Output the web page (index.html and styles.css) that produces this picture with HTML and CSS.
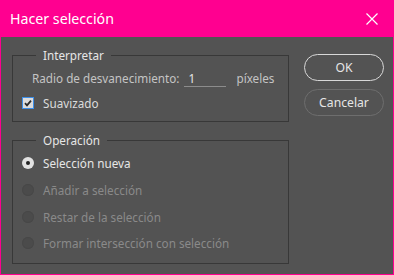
FILE: index.html
```html
<html>
<head>
<title>Hacer selección</title>
<link rel="stylesheet" href="styles.css">
</head>
<body>
<div class="window">
	<div class="titlebar">
		<span class="title">Hacer selección</span>
		<svg class="close" width="12" height="12" viewBox="0 0 12 12"><path d="M0.5 0.5L11.5 11.5M11.5 0.5L0.5 11.5" stroke="#fff" stroke-width="1.2" fill="none"/></svg>
	</div>
	<div class="content">
		<div class="groups">
			<fieldset class="group first">
				<legend>Interpretar</legend>
				<div class="row feather">
					<span class="label">Radio de desvanecimiento:</span>
					<input class="value" value="1">
					<span class="unit">píxeles</span>
				</div>
				<div class="row">
					<svg class="check" width="12" height="12" viewBox="0 0 12 12"><rect x="0.5" y="0.5" width="11" height="11" fill="#dcdcdc" stroke="#3d8ee8"/><path d="M3 6.2L5 8.3L9 3.6" stroke="#2a2a2a" stroke-width="1.8" fill="none"/></svg>
					<span class="text">Suavizado</span>
				</div>
			</fieldset>
			<fieldset class="group">
				<legend>Operación</legend>
				<div class="radio">
					<span class="dot on"></span><span class="text">Selección nueva</span>
				</div>
				<div class="radio disabled">
					<span class="dot"></span><span class="text">Añadir a selección</span>
				</div>
				<div class="radio disabled">
					<span class="dot"></span><span class="text">Restar de la selección</span>
				</div>
				<div class="radio disabled">
					<span class="dot"></span><span class="text">Formar intersección con selección</span>
				</div>
			</fieldset>
		</div>
		<div class="buttons">
			<button class="btn primary">OK</button>
			<button class="btn">Cancelar</button>
		</div>
	</div>
</div>
</body>
</html>
```
FILE: styles.css
```css
body {
	margin:0;
	font-family:"Noto Sans",sans-serif;
	font-size:11.7px;
}
.window {
	width:394px;
	height:275px;
	background-color:#ff0090;
	display:flex;
	flex-direction:column;
}
.titlebar {
	height:37px;
	display:flex;
	align-items:center;
	justify-content:space-between;
	padding:0 16px 0 10px;
	color:#fff;
}
.title {
	font-size:14.2px;
	margin-top:-1px;
}
.content {
	flex:1;
	margin:0 1px 1px 1px;
	background-color:#535353;
	display:flex;
	padding:10px 9px 0 11px;
}
.groups {
	width:277px;
}
.group {
	margin:0;
	border:1px solid #383838;
	padding:0 0 8px 9px;
	color:#dcdcdc;
}
.group + .group {
	margin-top:10px;
	padding-bottom:6px;
}
legend {
	margin-left:14px;
	padding:0 7px;
	line-height:16px;
	color:#e6e6e6;
}
.row {
	display:flex;
	align-items:center;
	height:20px;
	margin-top:5px;
}
.feather {
	padding-left:10px;
	color:#c4c4c4;
}
.value {
	width:42px;
	margin-left:5px;
	padding:0 0 0 4px;
	height:18px;
	background:transparent;
	border:none;
	border-bottom:1px solid #8c8c8c;
	color:#e6e6e6;
	font-family:"Noto Sans",sans-serif;
	font-size:11.7px;
	outline:none;
}
.unit {
	margin-left:10px;
}
.check {
	display:block;
}
.text {
	margin-left:9px;
}
.radio {
	display:flex;
	align-items:center;
	height:26.7px;
	color:#e6e6e6;
}
.radio:first-of-type {
	margin-top:2px;
}
.dot {
	width:12px;
	height:12px;
	border-radius:50%;
	background-color:#4b4b4b;
	box-shadow:inset 0 0 0 1px #484848;
	position:relative;
}
.dot.on {
	background-color:#e2e2e2;
	box-shadow:none;
}
.dot.on::after {
	content:"";
	position:absolute;
	left:4px;
	top:4px;
	width:4px;
	height:4px;
	border-radius:50%;
	background-color:#222;
}
.disabled {
	color:#8a8a8a;
}
.buttons {
	margin-left:15px;
	padding-top:7px;
	display:flex;
	flex-direction:column;
	gap:8px;
}
.btn {
	width:80px;
	height:27px;
	border-radius:14px;
	background:transparent;
	border:1px solid #6e6e6e;
	color:#e6e6e6;
	font-family:"Noto Sans",sans-serif;
	font-size:12.2px;
	padding:0;
}
.primary {
	border-color:#d8d8d8;
}
```
